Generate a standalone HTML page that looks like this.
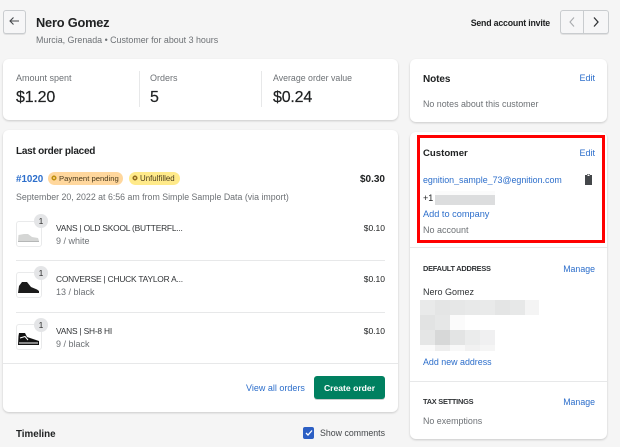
<!DOCTYPE html>
<html><head><meta charset="utf-8">
<style>
html,body{margin:0;padding:0}
body{width:620px;height:447px;overflow:hidden;background:#f5f5f5;position:relative;font-family:"Liberation Sans",sans-serif;color:#202223}
.a{position:absolute}
.t{position:absolute;white-space:nowrap;line-height:14px;height:14px;font-size:9px;transform:translateY(1px);filter:blur(.2px)}
.g{color:#6d7175}
.b{color:#2c6ecb}
.s{font-weight:700}
.r{text-align:right}
.v{font-size:16px;line-height:20px;height:20px;letter-spacing:-.2px;-webkit-text-stroke:.2px #202223}
.p{font-size:8.4px;letter-spacing:-.2px;color:#303336}
.card{position:absolute;background:#fff;border-radius:6px;box-shadow:0 1px 2px rgba(0,0,0,.18)}
.line{position:absolute;background:#e7e8e9;height:1px}
.th{position:absolute;left:16px;width:24px;height:24px;border:1px solid #e9eaeb;border-radius:3px;background:#fff}
.bd{position:absolute;left:34px;width:14px;height:14px;border-radius:50%;background:#e4e5e7;font-size:8.500px;line-height:14px;text-align:center;color:#303030}
.px{position:absolute;width:15px;height:15px}
</style></head><body>

<div class="a" style="left:3px;top:10px;width:21px;height:22px;border:1px solid #c9cccf;border-radius:3px;background:#f6f6f7;box-shadow:0 1px 0 rgba(0,0,0,.08)"></div>
<svg class="a" style="left:8px;top:15px" width="12" height="12" viewBox="0 0 12 12"><path d="M11 6H2M5.500 2.500L2 6l3.500 3.500" fill="none" stroke="#44474a" stroke-width="1.100"/></svg>
<div class="t s" style="left:36px;top:14px;font-size:12.800px;line-height:16px;height:16px;letter-spacing:-.2px">Nero Gomez</div>
<div class="t g" style="left:36px;top:32px;font-size:8.900px">Murcia, Grenada • Customer for about 3 hours</div>
<div class="t s r" style="left:450px;width:100px;top:15px;font-size:8.800px;letter-spacing:-.2px">Send account invite</div>
<div class="a" style="left:560px;top:10px;width:47px;height:22px;border:1px solid #c9cccf;border-radius:3px;background:#f6f6f7;box-shadow:0 1px 0 rgba(0,0,0,.08)"></div>
<div class="a" style="left:583px;top:11px;width:1px;height:22px;background:#c9cccf"></div>
<svg class="a" style="left:566px;top:16px" width="12" height="12" viewBox="0 0 12 12"><path d="M8 1.500L4 6l4 4.500" fill="none" stroke="#a8abae" stroke-width="1.100"/></svg>
<svg class="a" style="left:590px;top:16px" width="12" height="12" viewBox="0 0 12 12"><path d="M4 1.500L8 6l-4 4.500" fill="none" stroke="#303336" stroke-width="1.300"/></svg>

<div class="card" style="left:3px;top:59px;width:395px;height:61px"></div>
<div class="t g" style="left:16px;top:70px">Amount spent</div>
<div class="t v" style="left:16px;top:87px">$1.20</div>
<div class="a" style="left:139px;top:71px;width:1px;height:36px;background:#e7e8e9"></div>
<div class="t g" style="left:150px;top:70px">Orders</div>
<div class="t v" style="left:150px;top:87px">5</div>
<div class="a" style="left:261px;top:71px;width:1px;height:36px;background:#e7e8e9"></div>
<div class="t g" style="left:273px;top:70px;font-size:8.800px">Average order value</div>
<div class="t v" style="left:273px;top:87px">$0.24</div>

<div class="card" style="left:410px;top:59px;width:197px;height:63px"></div>
<div class="t s" style="left:423px;top:72px;font-size:10px;letter-spacing:-.1px">Notes</div>
<div class="t b r" style="left:555px;width:40px;top:70px">Edit</div>
<div class="t g" style="left:423px;top:96px;font-size:8.900px">No notes about this customer</div>

<div class="card" style="left:3px;top:130px;width:395px;height:282px"></div>
<div class="t s" style="left:16px;top:144px;font-size:10px;letter-spacing:-.25px">Last order placed</div>
<div class="t b s" style="left:16px;top:172px;font-size:9.800px">#1020</div>
<div class="a" style="left:48px;top:172px;width:75px;height:13px;border-radius:7px;background:#ffd79d"></div>
<div class="a" style="left:52px;top:176px;width:2px;height:2px;border:1px solid #b98900;border-radius:50%;box-shadow:0 0 0 .5px #b98900"></div>
<div class="t" style="left:59px;top:171px;font-size:7.700px;color:#4a3a1c">Payment pending</div>
<div class="a" style="left:129px;top:172px;width:51px;height:13px;border-radius:7px;background:#ffea8a"></div>
<div class="a" style="left:133px;top:176px;width:2px;height:2px;border:1px solid #8a6116;border-radius:50%;box-shadow:0 0 0 .5px #8a6116"></div>
<div class="t" style="left:140px;top:171px;font-size:7.900px;color:#4a3a1c">Unfulfilled</div>
<div class="t s r" style="left:325px;width:60px;top:172px;font-size:10px">$0.30</div>
<div class="t g" style="left:16px;top:189px;font-size:8.800px">September 20, 2022 at 6:56 am from Simple Sample Data (via import)</div>

<div class="th" style="top:221px"></div>
<svg class="a" style="left:17px;top:226px" width="24" height="20" viewBox="0 0 24 20"><path d="M1 15L1.500 9 7 8h4l4 3 6 1 1 3z" fill="#d5d6d5"/><path d="M1 15.500h21" stroke="#b5b7b7" stroke-width="1"/></svg>
<div class="bd" style="top:214px">1</div>
<div class="t p" style="left:56px;top:220px">VANS | OLD SKOOL (BUTTERFL...</div>
<div class="t g" style="left:56px;top:233px">9 / white</div>
<div class="t r" style="left:325px;width:60px;top:220px;font-size:8.500px">$0.10</div>
<div class="line" style="left:16px;top:260px;width:369px"></div>

<div class="th" style="top:272px"></div>
<svg class="a" style="left:16px;top:277px" width="26" height="20" viewBox="0 0 26 20"><path d="M2 16L3 9l3-4h5l4 5 6 2.500 2 1.500v2z" fill="#1b1b1b"/></svg>
<div class="bd" style="top:266px">1</div>
<div class="t p" style="left:56px;top:271px">CONVERSE | CHUCK TAYLOR A...</div>
<div class="t g" style="left:56px;top:284px">13 / black</div>
<div class="t r" style="left:325px;width:60px;top:271px;font-size:8.500px">$0.10</div>
<div class="line" style="left:16px;top:312px;width:369px"></div>

<div class="th" style="top:324px"></div>
<svg class="a" style="left:16px;top:329px" width="26" height="20" viewBox="0 0 26 20"><path d="M2 16l.5-9L3 4h6l2 4 6 2 6 2v4z" fill="#111"/><path d="M4 9l5-1.500 3 3.500M3 14h19" fill="none" stroke="#fff" stroke-width="1"/></svg>
<div class="bd" style="top:318px">1</div>
<div class="t p" style="left:56px;top:323px">VANS | SH-8 HI</div>
<div class="t g" style="left:56px;top:336px">9 / black</div>
<div class="t r" style="left:325px;width:60px;top:323px;font-size:8.500px">$0.10</div>
<div class="line" style="left:3px;top:363px;width:395px"></div>

<div class="t b" style="left:246px;top:380px">View all orders</div>
<div class="a" style="left:314px;top:376px;width:71px;height:23px;border-radius:3px;background:#008060;box-shadow:0 1px 0 rgba(0,0,0,.2)"></div>
<div class="t s" style="left:314px;width:71px;text-align:center;top:380px;font-size:8.600px;color:#fff">Create order</div>

<div class="t s" style="left:16px;top:427px;font-size:9.800px">Timeline</div>
<div class="a" style="left:303px;top:427px;width:11px;height:12px;background:#2c5fc4;border-radius:2px"></div>
<svg class="a" style="left:303px;top:427px" width="12" height="12" viewBox="0 0 12 12"><path d="M3 6l2 2 4-4.500" fill="none" stroke="#fff" stroke-width="1.300"/></svg>
<div class="t" style="left:320px;top:425px;font-size:8.800px;color:#44474a">Show comments</div>

<div class="card" style="left:410px;top:132px;width:197px;height:307px"></div>
<div class="a" style="left:417px;top:135px;width:182px;height:102px;border:3px solid #ff0000"></div>
<div class="t s" style="left:423px;top:146px;font-size:9.600px">Customer</div>
<div class="t b r" style="left:555px;width:40px;top:145px">Edit</div>
<div class="t b" style="left:423px;top:172px;font-size:8.900px">egnition_sample_73@egnition.com</div>
<svg class="a" style="left:583px;top:173px" width="11" height="12" viewBox="0 0 11 12"><path d="M2 2h2V1h3v1h2v10H2z" fill="#44474a"/><path d="M4.500 1.500h2v1.500h-2z" fill="#fff"/></svg>
<div class="t" style="left:423px;top:190px">+1</div>
<div class="a" style="left:435px;top:191px;width:60px;height:14px;background:linear-gradient(#fbfbfb 0 4px,#dcddde 4px)"></div>
<div class="t b" style="left:423px;top:206px;font-size:9.200px">Add to company</div>
<div class="t g" style="left:423px;top:222px">No account</div>
<div class="line" style="left:410px;top:247px;width:197px"></div>

<div class="t s" style="left:423px;top:261px;font-size:7.400px;letter-spacing:-.25px;color:#303336">DEFAULT ADDRESS</div>
<div class="t b r" style="left:545px;width:50px;top:261px;font-size:8.800px">Manage</div>
<div class="t" style="left:423px;top:284px;color:#303336">Nero Gomez</div>

<div class="px" style="left:420px;top:300px;background:#e9eaea"></div>
<div class="px" style="left:435px;top:300px;background:#e4e5e5"></div>
<div class="px" style="left:450px;top:300px;background:#e6e7e7"></div>
<div class="px" style="left:465px;top:300px;background:#e8e9e9"></div>
<div class="px" style="left:480px;top:300px;background:#e9eaea"></div>
<div class="px" style="left:495px;top:300px;background:#e4e5e5"></div>
<div class="px" style="left:510px;top:300px;background:#e7e8e8"></div>
<div class="px" style="left:525px;top:300px;background:#f4f4f4;width:14px"></div>
<div class="px" style="left:420px;top:315px;background:#e2e3e3"></div>
<div class="px" style="left:435px;top:315px;background:#e6e7e7"></div>
<div class="px" style="left:450px;top:315px;background:#fbfbfb"></div>
<div class="px" style="left:420px;top:330px;background:#e5e6e6"></div>
<div class="px" style="left:435px;top:330px;background:#d7d8d8"></div>
<div class="px" style="left:450px;top:330px;background:#e3e4e4"></div>
<div class="px" style="left:465px;top:330px;background:#ebecec"></div>
<div class="px" style="left:480px;top:330px;background:#f0f0f1"></div>
<div class="px" style="left:420px;top:345px;height:6px;background:#fafafa"></div>
<div class="px" style="left:435px;top:345px;height:6px;background:#eeeeee"></div>
<div class="px" style="left:450px;top:345px;height:6px;background:#f8f8f8"></div>
<div class="px" style="left:465px;top:345px;height:6px;background:#f1f1f1"></div>
<div class="px" style="left:480px;top:345px;height:6px;background:#f5f5f5"></div>

<div class="t b" style="left:423px;top:354px;font-size:8.900px">Add new address</div>
<div class="line" style="left:410px;top:381px;width:197px"></div>
<div class="t s" style="left:423px;top:394px;font-size:7.400px;letter-spacing:-.25px;color:#303336">TAX SETTINGS</div>
<div class="t b r" style="left:545px;width:50px;top:394px;font-size:8.800px">Manage</div>
<div class="t g" style="left:423px;top:413px;font-size:8.900px">No exemptions</div>

</body></html>
